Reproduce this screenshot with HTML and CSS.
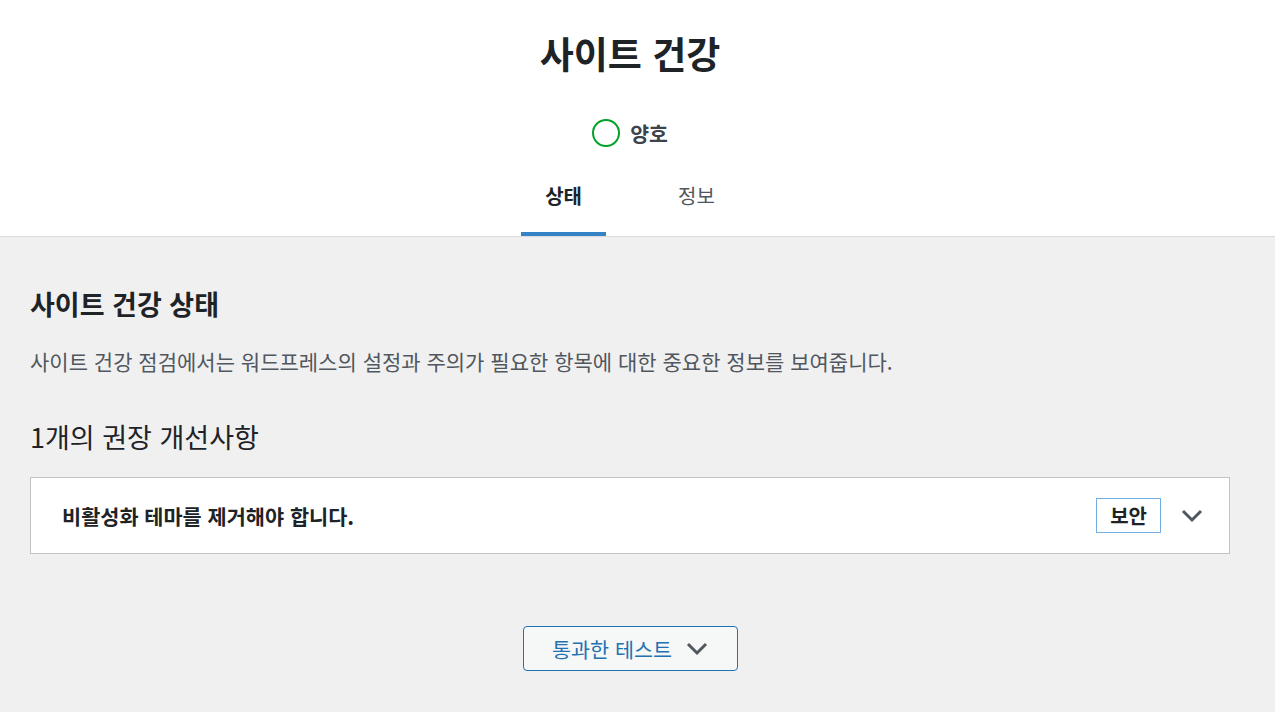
FILE: index.html
```html
<!DOCTYPE html>
<html lang="ko">
<head>
<meta charset="utf-8">
<title>사이트 건강</title>
<link rel="stylesheet" href="styles.css">
</head>
<body>
<header class="header">
  <div class="wrap header-inner">
    <h1 class="title">사이트 건강</h1>
    <div class="status">
      <span class="ring"></span>
      <span class="status-label">양호</span>
    </div>
    <nav class="tabs">
      <a class="tab active">상태</a>
      <a class="tab">정보</a>
    </nav>
  </div>
</header>
<main class="wrap body">
  <h2 class="section-title">사이트 건강 상태</h2>
  <p class="desc">사이트 건강 점검에서는 워드프레스의 설정과 주의가 필요한 항목에 대한 중요한 정보를 보여줍니다.</p>
  <h3 class="count">1개의 권장 개선사항</h3>
  <div class="item">
    <span class="item-title">비활성화 테마를 제거해야 합니다.</span>
    <span class="badge">보안</span>
    <svg class="chev" width="22" height="14" viewBox="0 0 22 14"><path d="M2 2 L11 11 L20 2" fill="none" stroke="#50575e" stroke-width="3"/></svg>
  </div>
  <div class="btn-row">
    <button class="toggle">통과한 테스트
      <svg class="chev-btn" width="22" height="14" viewBox="0 0 22 14"><path d="M2 2 L11 11 L20 2" fill="none" stroke="#50575e" stroke-width="3"/></svg>
    </button>
  </div>
</main>
</body>
</html>
```
FILE: styles.css
```css
html, body {
  margin: 0;
  padding: 0;
}
body {
  background: #f0f0f1;
  font-family: "Noto Sans CJK KR", "Noto Sans", sans-serif;
  color: #1d2327;
}
.wrap {
  width: 1200px;
  margin-left: 30px;
}
.header {
  background: #fff;
  border-bottom: 1px solid #dcdcde;
}
.header-inner {
  display: flex;
  flex-direction: column;
  align-items: center;
}
.title {
  margin: 28px 0 0;
  font-size: 37px;
  line-height: 50px;
  font-weight: 700;
  color: #1d2327;
}
.status {
  display: flex;
  align-items: center;
  gap: 10px;
  margin-top: 40px;
  height: 30px;
}
.ring {
  width: 24px;
  height: 24px;
  border: 2px solid #00a32a;
  border-radius: 50%;
}
.status-label {
  font-size: 20.5px;
  font-weight: 700;
  color: #3c434a;
}
.tabs {
  display: flex;
  margin-top: 18px;
}
.tab {
  display: block;
  padding: 0 24px;
  height: 70px;
  line-height: 60px;
  font-size: 20px;
  color: #50575e;
  box-sizing: border-box;
  border-bottom: 4px solid transparent;
  margin: 0 24px;
}
.tab:first-child { margin-left: 0; }
.tab:last-child { margin-right: 0; }
.tab.active {
  font-weight: 700;
  color: #1d2327;
  border-bottom-color: #3582c4;
}
.body {
  padding-top: 50px;
  padding-bottom: 40px;
}
.section-title {
  margin: 0;
  font-size: 27px;
  line-height: 34px;
  font-weight: 700;
}
.desc {
  margin: 25px 0 0;
  font-size: 21px;
  line-height: 30px;
  color: #50575e;
}
.count {
  margin: 43px 0 0;
  font-size: 27px;
  line-height: 36px;
  font-weight: 400;
}
.item {
  margin-top: 22px;
  background: #fff;
  border: 1px solid #c3c4c7;
  height: 75px;
  display: flex;
  align-items: center;
  padding: 0 26px 0 31px;
}
.item-title {
  flex: 1;
  font-size: 20.8px;
  font-weight: 700;
  color: #1d2327;
}
.badge {
  border: 1px solid #72aee6;
  font-size: 20px;
  font-weight: 700;
  padding: 0 13px;
  height: 33px;
  line-height: 33px;
  color: #1d2327;
}
.chev {
  margin-left: 20px;
}
.btn-row {
  display: flex;
  justify-content: center;
  margin-top: 72px;
}
.toggle {
  font-family: inherit;
  width: 215px;
  height: 45px;
  border: 1px solid #2271b1;
  border-radius: 4px;
  background: #f6f7f7;
  color: #2271b1;
  font-size: 20.7px;
  display: flex;
  align-items: center;
  justify-content: center;
  gap: 14px;
  padding: 0;
}
```
